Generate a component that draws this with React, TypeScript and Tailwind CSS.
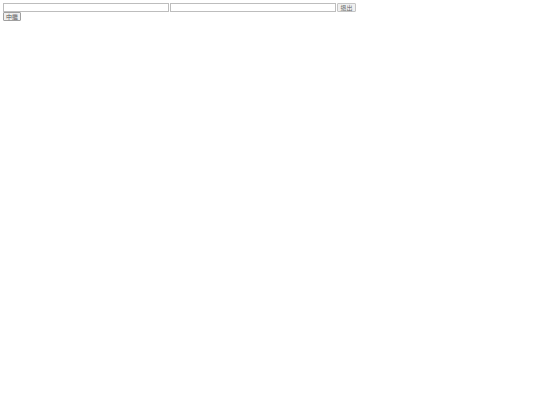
import React from "react";

export default function App() {
  return (
    <div className="min-h-[405px] w-[540px] bg-white pl-[3px] pt-[3px] font-['Noto_Sans_CJK_TC',sans-serif] antialiased">
      <div className="flex items-center gap-[1px]">
        <input
          type="text"
          className="h-[9px] w-[166px] border border-[#bdbdbd] bg-white outline-none"
        />
        <input
          type="text"
          className="h-[9px] w-[166px] border border-[#bdbdbd] bg-white outline-none"
        />
        <button className="flex h-[9px] w-[19px] items-center justify-center rounded-[1px] border border-[#c4c4c4] bg-[#f0f0f0] text-[6px] leading-none text-[#666]">
          退出
        </button>
      </div>
      <div className="flex">
        <button className="flex h-[9px] w-[18px] items-center justify-center rounded-[1px] border border-[#a0a0a0] bg-[#efefef] text-[6px] leading-none text-[#555]">
          中繼
        </button>
      </div>
    </div>
  );
}
